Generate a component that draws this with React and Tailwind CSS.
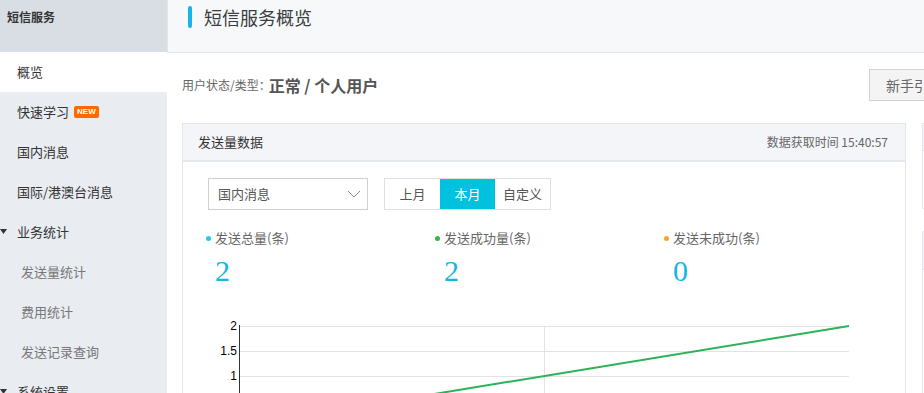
import React from 'react';

const font = { fontFamily: '"Noto Sans CJK SC", "Liberation Sans", sans-serif' };

function Sidebar() {
  const items = [
    { label: '概览', active: true },
    { label: '快速学习', badge: true },
    { label: '国内消息' },
    { label: '国际/港澳台消息' },
    { label: '业务统计', group: true },
    { label: '发送量统计', sub: true },
    { label: '费用统计', sub: true },
    { label: '发送记录查询', sub: true },
    { label: '系统设置', group: true },
  ];
  return (
    <div className="w-[167px] shrink-0 h-[393px] overflow-hidden bg-[#e9ecf0]">
      <div className="h-[52px] bg-[#d9dde4] pl-[7px] pt-[8px] text-[12px] font-bold text-[#333] leading-[18px]">
        短信服务
      </div>
      {items.map((it) => (
        <div
          key={it.label}
          className={
            'h-[40px] flex items-center text-[13px] pb-[1px] ' +
            (it.active ? 'bg-white ' : '') +
            (it.sub ? 'pl-[21px] text-[#777]' : it.group ? 'pl-0 text-[#333]' : 'pl-[17px] text-[#333]')
          }
        >
          {it.group && (
            <svg width="7" height="5" viewBox="0 0 7 5" className="mr-[10px]">
              <path d="M0 0 L7 0 L3.5 5 Z" fill="#333" />
            </svg>
          )}
          <span>{it.label}</span>
          {it.badge && (
            <span className="ml-[5px] bg-[#ff6a00] text-white text-[8px] font-bold leading-[12px] px-[3px] rounded-[2px]" style={{ fontFamily: '"Liberation Sans", sans-serif' }}>
              NEW
            </span>
          )}
        </div>
      ))}
    </div>
  );
}

function Stat({ color, label, value }) {
  return (
    <div className="w-[229px]">
      <div className="flex items-center text-[13px] text-[#666] leading-[18px]">
        <span className="w-[5px] h-[5px] rounded-full mr-[4px]" style={{ background: color }} />
        {label}
      </div>
      <div className="mt-[6px] pl-[9px] text-[30px] font-light leading-[36px] text-[#16b6e0]" style={{ fontFamily: '"Liberation Serif", serif' }}>
        {value}
      </div>
    </div>
  );
}

function Chart() {
  const labels = [['2', 25], ['1.5', 50], ['1', 75], ['0.5', 100], ['0', 125]];
  return (
    <svg width="660" height="140" className="block mt-[12px]" style={{ fontFamily: '"Liberation Sans", sans-serif' }}>
      {labels.map(([t, y]) => (
        <g key={t}>
          <line x1="31" x2="641" y1={y + 0.5} y2={y + 0.5} stroke="#e3e3e3" />
          <text x="29" y={y + 4} fontSize="12" textAnchor="end" fill="#000">{t}</text>
        </g>
      ))}
      <line x1="336.5" x2="336.5" y1="25" y2="140" stroke="#e3e3e3" />
      <line x1="31.5" x2="31.5" y1="24" y2="140" stroke="#333" />
      <line x1="31" y1="125" x2="641" y2="25" stroke="#2bb35a" strokeWidth="2" />
    </svg>
  );
}

export default function App() {
  return (
    <div className="flex w-[924px] h-[393px] overflow-hidden bg-white" style={font}>
      <Sidebar />
      <div className="flex-1 overflow-hidden">
        <div className="h-[53px] bg-[#f7f8fa] border-b border-l border-[#e4e6ea] flex items-start pt-[6px] pl-[20px]">
          <span className="w-[4px] h-[22px] bg-[#19b4e6] rounded-[2px] mr-[12px]" />
          <span className="text-[18px] text-[#373d41] leading-[22px]">短信服务概览</span>
        </div>
        <div className="pl-[15px] w-[1000px]">
          <div className="flex items-center justify-between w-[777px] pt-[16px]">
            <div className="flex items-center text-[#666]">
              <span className="text-[12px]">用户状态/类型：</span>
              <span className="text-[16px] font-bold text-[#555] -ml-[2px]">正常 / 个人用户</span>
            </div>
            <button className="h-[32px] w-[90px] bg-[#f4f4f4] border border-[#d3d3d3] text-[14px] text-[#666] text-left pl-[16px]">
              新手引导
            </button>
          </div>
          <div className="flex gap-[16px] mt-[22px]">
            <div className="w-[724px] shrink-0 border border-[#e4e7ec] h-[300px]">
              <div className="h-[38px] bg-[#f3f5f8] border-b-2 border-[#e4e7ec] flex items-center justify-between pl-[15px] pr-[17px]">
                <span className="text-[13px] text-[#333]">发送量数据</span>
                <span className="text-[12px] text-[#666]">数据获取时间 15:40:57</span>
              </div>
              <div className="pl-[25px] pt-[16px]">
                <div className="flex items-center">
                  <div className="w-[160px] h-[32px] border border-[#d0d0d0] flex items-center justify-between pl-[9px] pr-[6px] text-[13px] text-[#555]">
                    国内消息
                    <svg width="14" height="8" viewBox="0 0 14 8">
                      <path d="M1 1 L7 7 L13 1" fill="none" stroke="#888" strokeWidth="1" />
                    </svg>
                  </div>
                  <div className="ml-[16px] flex h-[32px] border border-[#e0e0e0] text-[13px]">
                    <div className="w-[55px] flex items-center justify-center text-[#555]">上月</div>
                    <div className="w-[55px] flex items-center justify-center bg-[#00c1de] text-white">本月</div>
                    <div className="w-[55px] flex items-center justify-center text-[#555]">自定义</div>
                  </div>
                </div>
                <div className="flex mt-[19px] -ml-[2px]">
                  <Stat color="#2bc6e8" label="发送总量(条)" value="2" />
                  <Stat color="#3bb54a" label="发送成功量(条)" value="2" />
                  <Stat color="#f5a623" label="发送未成功(条)" value="0" />
                </div>
                <Chart />
              </div>
            </div>
            <div className="w-[240px] shrink-0 flex flex-col gap-[22px]">
              <div className="h-[86px] border border-[#e4e7ec]">
                <div className="h-[27px] bg-[#f3f5f8] border-b border-[#e4e7ec]" />
              </div>
              <div className="h-[200px] border border-[#e4e7ec]">
                <div className="h-[38px] bg-[#f3f5f8] border-b border-[#e4e7ec]" />
              </div>
            </div>
          </div>
        </div>
      </div>
    </div>
  );
}
